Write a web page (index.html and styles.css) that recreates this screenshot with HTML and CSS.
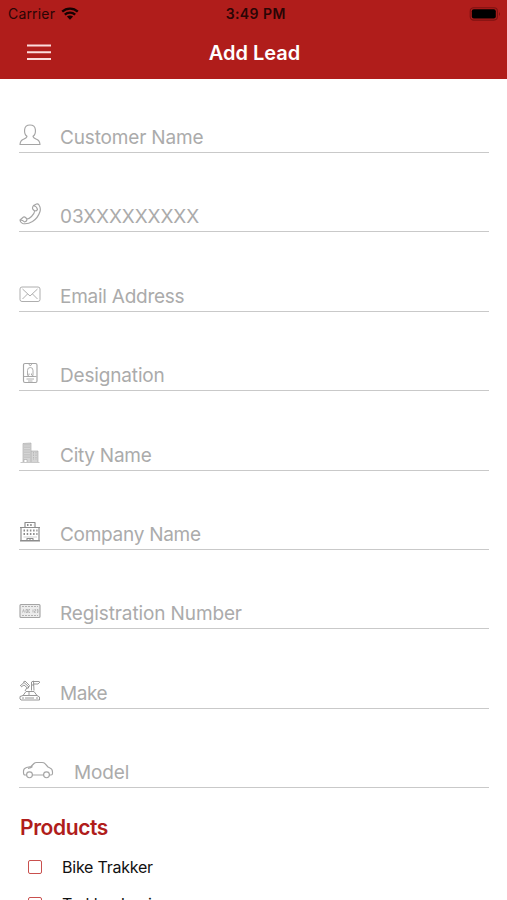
FILE: index.html
```html
<!DOCTYPE html>
<html lang="en">
<head>
<meta charset="utf-8">
<title>Add Lead</title>
<link rel="stylesheet" href="styles.css">
</head>
<body>
<div class="screen">
  <header class="header">
    <div class="status">
      <div class="carrier"><span>Carrier</span>
        <svg class="wifi" width="18" height="14" viewBox="0 0 18 14"><path d="M1.200 4.600C5.500 .5 12.500 .5 16.800 4.600M3.800 7.600C6.700 5 11.300 5 14.200 7.600" fill="none" stroke="currentColor" stroke-width="2.300"/><path d="M5.900 9.600C7.700 8.100 10.300 8.100 12.100 9.600L9 12.700Z" fill="currentColor"/></svg>
      </div>
      <div class="time">3:49 PM</div>
      <svg class="battery" width="32" height="14" viewBox="0 0 32 14"><rect x="1.200" y=".7" width="27.200" height="12.400" rx="3.500" fill="none" stroke="#7d1212" stroke-width="1.100"/><rect x="2.800" y="2.300" width="24" height="9.200" rx="2" fill="#000"/><path d="M30 5q2 2 0 4z" fill="#7d1212"/></svg>
    </div>
    <div class="nav">
      <svg class="menu" width="24" height="17" viewBox="0 0 24 17"><path d="M0 1.500H24M0 8.300H24M0 15H24" stroke="#fcdcdc" stroke-width="2.100"/></svg>
      <h1>Add Lead</h1>
    </div>
  </header>
  <main class="form">
    <div class="field"><svg class="icon" viewBox="0 0 22 22"><path d="M8 12.300C5.700 10.800 5.400 8 5.600 5.700C5.900 2.700 8 1 11 1S16.100 2.700 16.400 5.700C16.600 8 16.300 10.800 14 12.300C14.200 14 15.500 14.500 17.500 15.200C20 16.100 20.800 17.700 21 20.500H1C1.200 17.700 2 16.100 4.500 15.200C6.500 14.500 7.800 14 8 12.300Z"/></svg><span class="customer">Customer Name</span></div>
    <div class="field"><svg class="icon" viewBox="0 0 22 22"><path d="M14.500 2.500L17.500 1Q19 .5 20 2Q22 5 21 8.500Q19 15 13.500 18.500Q8.500 21.500 3.500 20.500Q1 19.500 1 17L4.500 14Q5.500 13.500 6.500 14.500L8 16Q10 16 12.500 13.500Q15.500 10.500 15.700 8L14 6.500Q12.800 5 14.500 2.500ZM14.500 2.500Q18 3.500 18.500 6.500Q18 8 15.700 8M1 17Q4 17 5.500 19Q8 18.500 8 16"/></svg><span class="phone">03XXXXXXXXX</span></div>
    <div class="field"><svg class="icon thin" viewBox="0 0 22 22"><rect x="1" y="4" width="20" height="14.500" rx="2"/><path d="M3.500 6L11 13L18.500 6M3.500 16L8.500 11M18.500 16L13.500 11"/></svg><span class="email">Email Address</span></div>
    <div class="field"><svg class="icon" viewBox="0 0 22 22"><rect x="4.500" y="1.500" width="13.500" height="19" rx="1.500"/><path d="M9.500 1.500L11.300 4L13.100 1.500M8.500 13V8.500Q8.500 5.500 11.300 5.500T14 8.500V13M10 11.500V13L7.500 14.500H15L12.500 13V11.500M5 14.500H17.500M7.500 17H15M9 19H13.500" stroke-width=".9"/></svg><span class="designation">Designation</span></div>
    <div class="field"><svg class="icon" viewBox="0 0 22 22"><path class="fill" d="M4 1.500L12 1V20H4ZM12 9H19V20H12Z"/><path d="M4 20V1.500L12 1V20M12 9H19V20M1.500 20.500H20.500" stroke-width=".6"/><path d="M6 2V17M8 2V17M10 2V17M14.500 10V18M17 10V18" stroke-dasharray="1.500 1" stroke-width=".6"/><path d="M5 20V17.500H8V20" fill="#fff" stroke-width=".6"/></svg><span class="city">City Name</span></div>
    <div class="field"><svg class="icon dark" viewBox="0 0 22 22"><path d="M6 6V1.500H16V6M1 6.500H21M2 6.500V19.500H20V6.500M1 19.800H21M8 20V17.500H14V20M11 17.500V20"/><path d="M8 4H14.500M4.500 9.500H18.500M4.500 13H18.500" stroke-width="1.800" stroke-dasharray="1.500 1.700"/><path d="M4.500 16H18" stroke-width=".4"/></svg><span class="company">Company Name</span></div>
    <div class="field"><svg class="icon" viewBox="0 0 22 22"><rect class="fill pale" x="1" y="4" width="20" height="13.500" rx="1"/><rect x="1" y="4.500" width="20" height="13" rx="1"/><path d="M3 6.500H19M3 15.500H19" stroke-dasharray="2 1" stroke-width=".8"/><path d="M3.500 12.500L4.500 9.500L5.500 12.500M7 9.500V12.500H8.500V9.500H7M11 9.500H9.800V12.500H11M14 9.500V12.500M15.500 9.500H16.700V11H15.500V12.500H16.700M18 9.500H19V12.500H18M18 11H19" stroke-width=".7"/></svg><span class="registration">Registration Number</span></div>
    <div class="field"><svg class="icon dark" viewBox="0 0 22 22"><path d="M1 19V16.500L4 15.500L7 11.500H15L18 15.500L20.500 17V20H2L1 19M4 15.500H18M6 18H15M10 11.500V15M3 18H5M17 18H19M1 6L5 2.500L10 7M2 7L5 5L9 8.500M4 2.500L6 1L10.500 5.500L9 8.500M8 7.500L6 11M12.500 10.500V2L14.500 1L15 10.500M14.500 1.500H20.500M14.500 4H19L21 2M13 5H15" stroke-width=".9"/></svg><span class="make">Make</span></div>
    <div class="field car"><svg class="icon" viewBox="0 0 32 22"><path d="M5 16H3Q1.500 16 1.500 13.500V12Q1.500 9.500 4.500 8.500L9 7.500L12 4.500Q13 3.500 14.500 3.500H20Q22 3.500 23 4.700L26 8L28 9Q30.500 10 30.500 13V14.500Q30.500 16 29 16H27M10 16H22M6 9.500Q9 9 10.500 7.500"/><circle cx="7.500" cy="15.800" r="2.900"/><circle cx="24.500" cy="15.800" r="2.900"/></svg><span class="model">Model</span></div>
    <h2>Products</h2>
    <div class="option"><i class="box"></i><span class="bike">Bike Trakker</span></div>
    <div class="option"><i class="box"></i><span class="logi">Trakker Logi</span></div>
  </main>
</div>
</body>
</html>
```
FILE: styles.css
```css
* { box-sizing: border-box; }
body { margin: 0; background: #fff; font-family: Inter, "Liberation Sans", sans-serif; }
.screen { width: 507px; height: 900px; overflow: hidden; }
.header { height: 79px; background: #b01d1b; }
.status { height: 27px; padding: 0 6px 0 8px; display: grid; grid-template-columns: 1fr auto 1fr; align-items: center; color: #2a0505; font-size: 14px; line-height: 27px; }
.carrier { display: flex; align-items: center; gap: 6px; letter-spacing: .18px; }
.wifi { color: #160202; }
.time { font-weight: 600; letter-spacing: .42px; margin: 0 -1.2px 0 1.2px; }
.battery { justify-self: end; }
.nav { height: 52px; padding: 0 27px; display: grid; grid-template-columns: 1fr auto 1fr; align-items: center; }
.menu { margin: -2px 0 0 -.5px; }
.nav h1 { margin: 0 -1px 0 1px; color: #fff; font-size: 20px; font-weight: 560; line-height: 50px; }
.form { padding: 0 18px 0 19px; }
.field { height: 79.4px; display: flex; align-items: flex-end; border-bottom: 1.5px solid #c9c9c9; color: #ababab; font-size: 19px; line-height: 24px; letter-spacing: -.16px; padding-bottom: 2px; white-space: nowrap; }
.field:first-child { height: 74px; }
.icon { width: 22px; height: 22px; margin-bottom: 4px; margin-right: 19px; fill: none; stroke: #a5a5a5; stroke-width: 1.15; stroke-linejoin: round; }
.icon.dark { stroke: #8c8c8c; }
.icon.thin { stroke-width: .9; }
.icon .fill { fill: #d5d5d5; stroke: none; }
.icon .pale { fill: #ececec; }
.phone { letter-spacing: -.08px; }
.email { letter-spacing: -.25px; }
.company { letter-spacing: -.28px; }
.city { letter-spacing: -.25px; }
.registration { letter-spacing: -.12px; }
.make { letter-spacing: -.45px; }
.car .icon { width: 32px; margin-left: 3px; margin-right: 20px; }
h2 { margin: 26px 0 0 1px; color: #b01d1b; font-size: 21px; font-weight: 580; letter-spacing: -.4px; line-height: 28px; }
.option { height: 36.5px; display: flex; align-items: center; color: #111; font-size: 16px; letter-spacing: -.23px; }
h2 + .option { margin-top: 6.8px; }
.logi { letter-spacing: -.35px; }
.box { width: 14px; height: 14px; margin: 0 20px 0 9px; border: 1px solid #c9504e; border-radius: 2px; }
```
